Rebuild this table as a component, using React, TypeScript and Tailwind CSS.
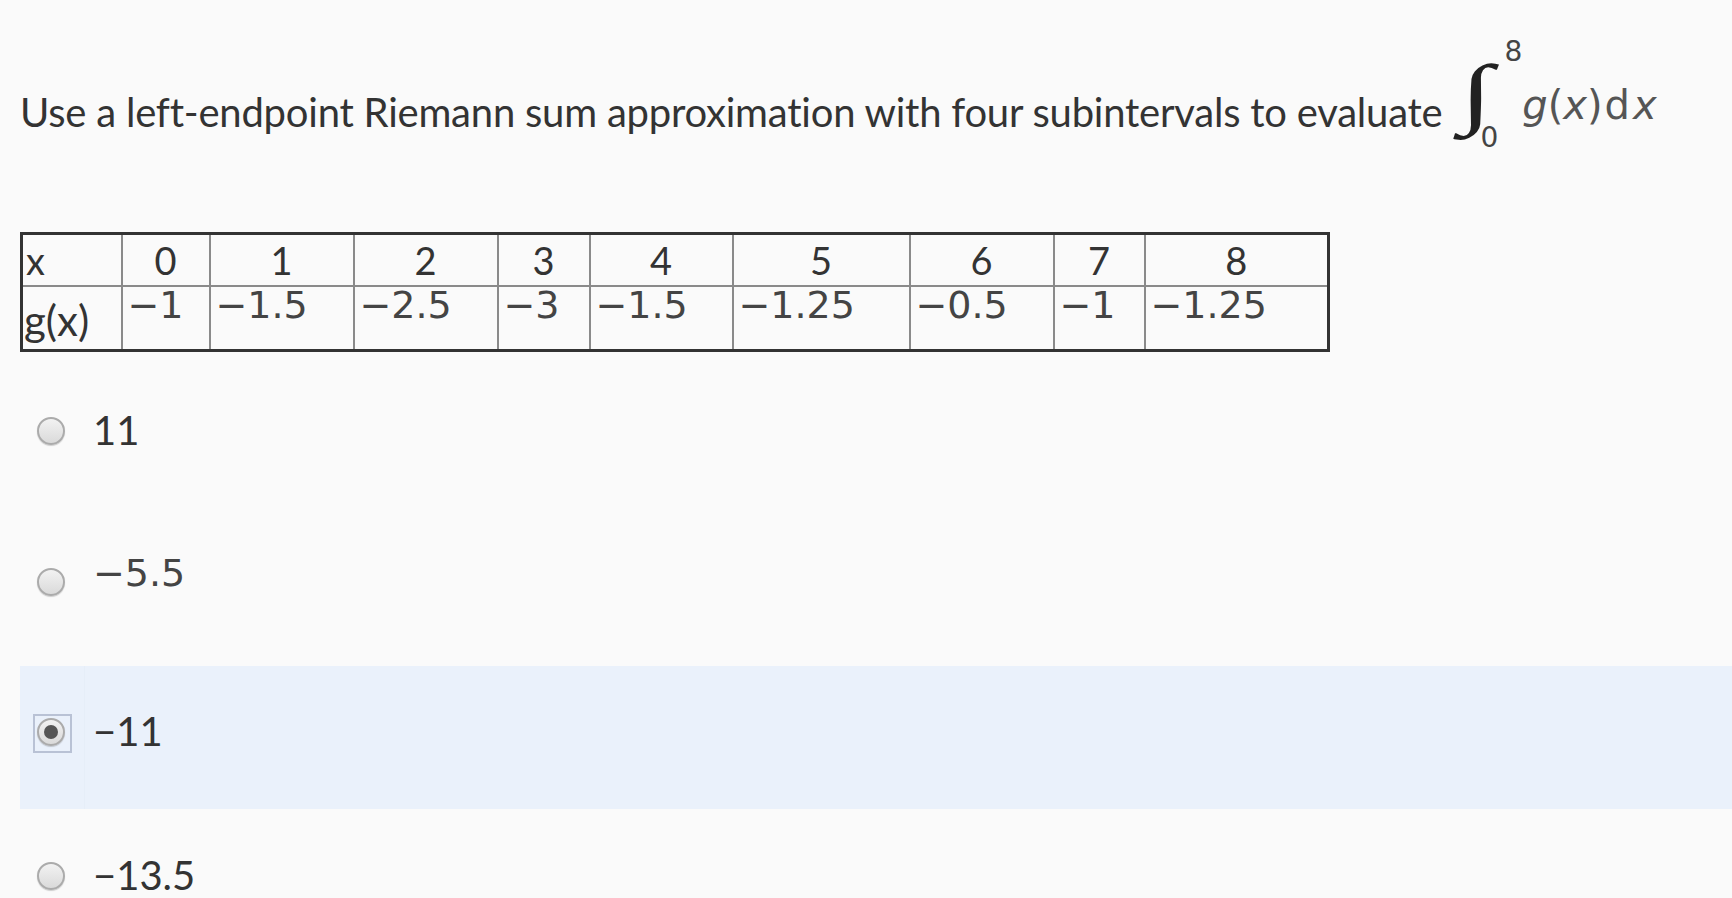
import React from "react";

const xs = ["0", "1", "2", "3", "4", "5", "6", "7", "8"];
const gs = ["−1", "−1.5", "−2.5", "−3", "−1.5", "−1.25", "−0.5", "−1", "−1.25"];

function Radio({ checked }: { checked?: boolean }) {
  return (
    <div className="relative h-[28px] w-[28px]">
      {checked && (
        <div className="absolute left-[-4px] top-[-4px] h-[39px] w-[39px] border-2 border-[#b9c2d5]" />
      )}
      <div className="relative flex h-[28px] w-[28px] items-center justify-center rounded-full border-2 border-[#ababab] bg-gradient-to-b from-[#f2f2f2] to-[#dadada] shadow-[0_1px_1px_rgba(0,0,0,0.18)]">
        {checked && <div className="h-[14px] w-[14px] rounded-full bg-[#555]" />}
      </div>
    </div>
  );
}

function Option({
  label,
  math,
  checked,
  className,
}: {
  label: string;
  math?: boolean;
  checked?: boolean;
  className?: string;
}) {
  return (
    <div className={`flex h-[143px] ${checked ? "bg-[#eaf1fb]" : ""} ${className ?? ""}`}>
      <div
        className={`w-[65px] shrink-0 pl-[17px] pt-[52px] ${checked ? "border-r border-[#e6eef8]" : ""}`}
      >
        <Radio checked={checked} />
      </div>
      {math ? (
        <div className="pl-[8px] pt-[39px] font-['DejaVu_Sans',sans-serif] text-[38px] leading-[36px] text-[#444]">
          {label}
        </div>
      ) : (
        <div className="pl-[8px] pt-[45px] text-[40px] leading-[40px]">{label}</div>
      )}
    </div>
  );
}

export default function App() {
  return (
    <div className="h-[898px] w-full overflow-hidden bg-[#fafafa] pl-[20px] font-['Lato',sans-serif] text-[#333]">
      {/* question */}
      <div className="flex h-[160px] items-start">
        <span className="mt-[92px] text-[40px] leading-[40px] tracking-[-0.22px] whitespace-nowrap">
          Use a left-endpoint Riemann sum approximation with four subintervals to evaluate
        </span>
        <span className="ml-[18px] mt-[63px] inline-block w-[16px] origin-left scale-x-[1.55] font-['Liberation_Serif',serif] text-[78px] leading-[60px] text-[#222]">
          ∫
        </span>
        <div className="flex flex-col font-['DejaVu_Sans',sans-serif] text-[28px] leading-[28px] text-[#444]">
          <span className="ml-[28px] mt-[38px]">8</span>
          <span className="ml-[4px] mt-[58px]">0</span>
        </div>
        <span className="ml-[0px] mt-[86px] font-['DejaVu_Sans',sans-serif] text-[40px] leading-[38px] text-[#555] whitespace-nowrap">
          <i>g</i>(<i>x</i>)<span className="ml-[2px]">d</span>
          <i className="ml-[3px]">x</i>
        </span>
      </div>

      {/* table */}
      <table className="mt-[72px] w-[1307px] table-fixed border-collapse border-[3px] border-[#333]">
        <colgroup>
          <col className="w-[100px]" />
          <col className="w-[88px]" />
          <col className="w-[144px]" />
          <col className="w-[144px]" />
          <col className="w-[92px]" />
          <col className="w-[143px]" />
          <col className="w-[177px]" />
          <col className="w-[144px]" />
          <col className="w-[91px]" />
          <col className="w-[184px]" />
        </colgroup>
        <tbody>
          <tr className="h-[52px]">
            <td className="border-2 border-[#8a8a8a] pl-[3px] text-[38px] leading-[38px]">x</td>
            {xs.map((x) => (
              <td key={x} className="border-2 border-[#8a8a8a] text-center text-[38px] leading-[38px]">
                {x}
              </td>
            ))}
          </tr>
          <tr className="h-[65px]">
            <td className="border-2 border-[#8a8a8a] pl-[1px] pt-[4px] text-[42px] leading-[40px]">g(x)</td>
            {gs.map((g, i) => (
              <td
                key={i}
                className="border-2 border-[#8a8a8a] p-0 pl-[5px] align-top font-['DejaVu_Sans',sans-serif] text-[38px] leading-[36px] text-[#444] whitespace-nowrap"
              >
                {g}
              </td>
            ))}
          </tr>
        </tbody>
      </table>

      {/* answers */}
      <div className="mt-[13px] flex flex-col">
        <Option label="11" />
        <Option label="−5.5" math className="mt-[8px]" />
        <Option label="−11" checked className="mt-[7px]" />
        <Option label="−13.5" className="mt-[1px]" />
      </div>
    </div>
  );
}
